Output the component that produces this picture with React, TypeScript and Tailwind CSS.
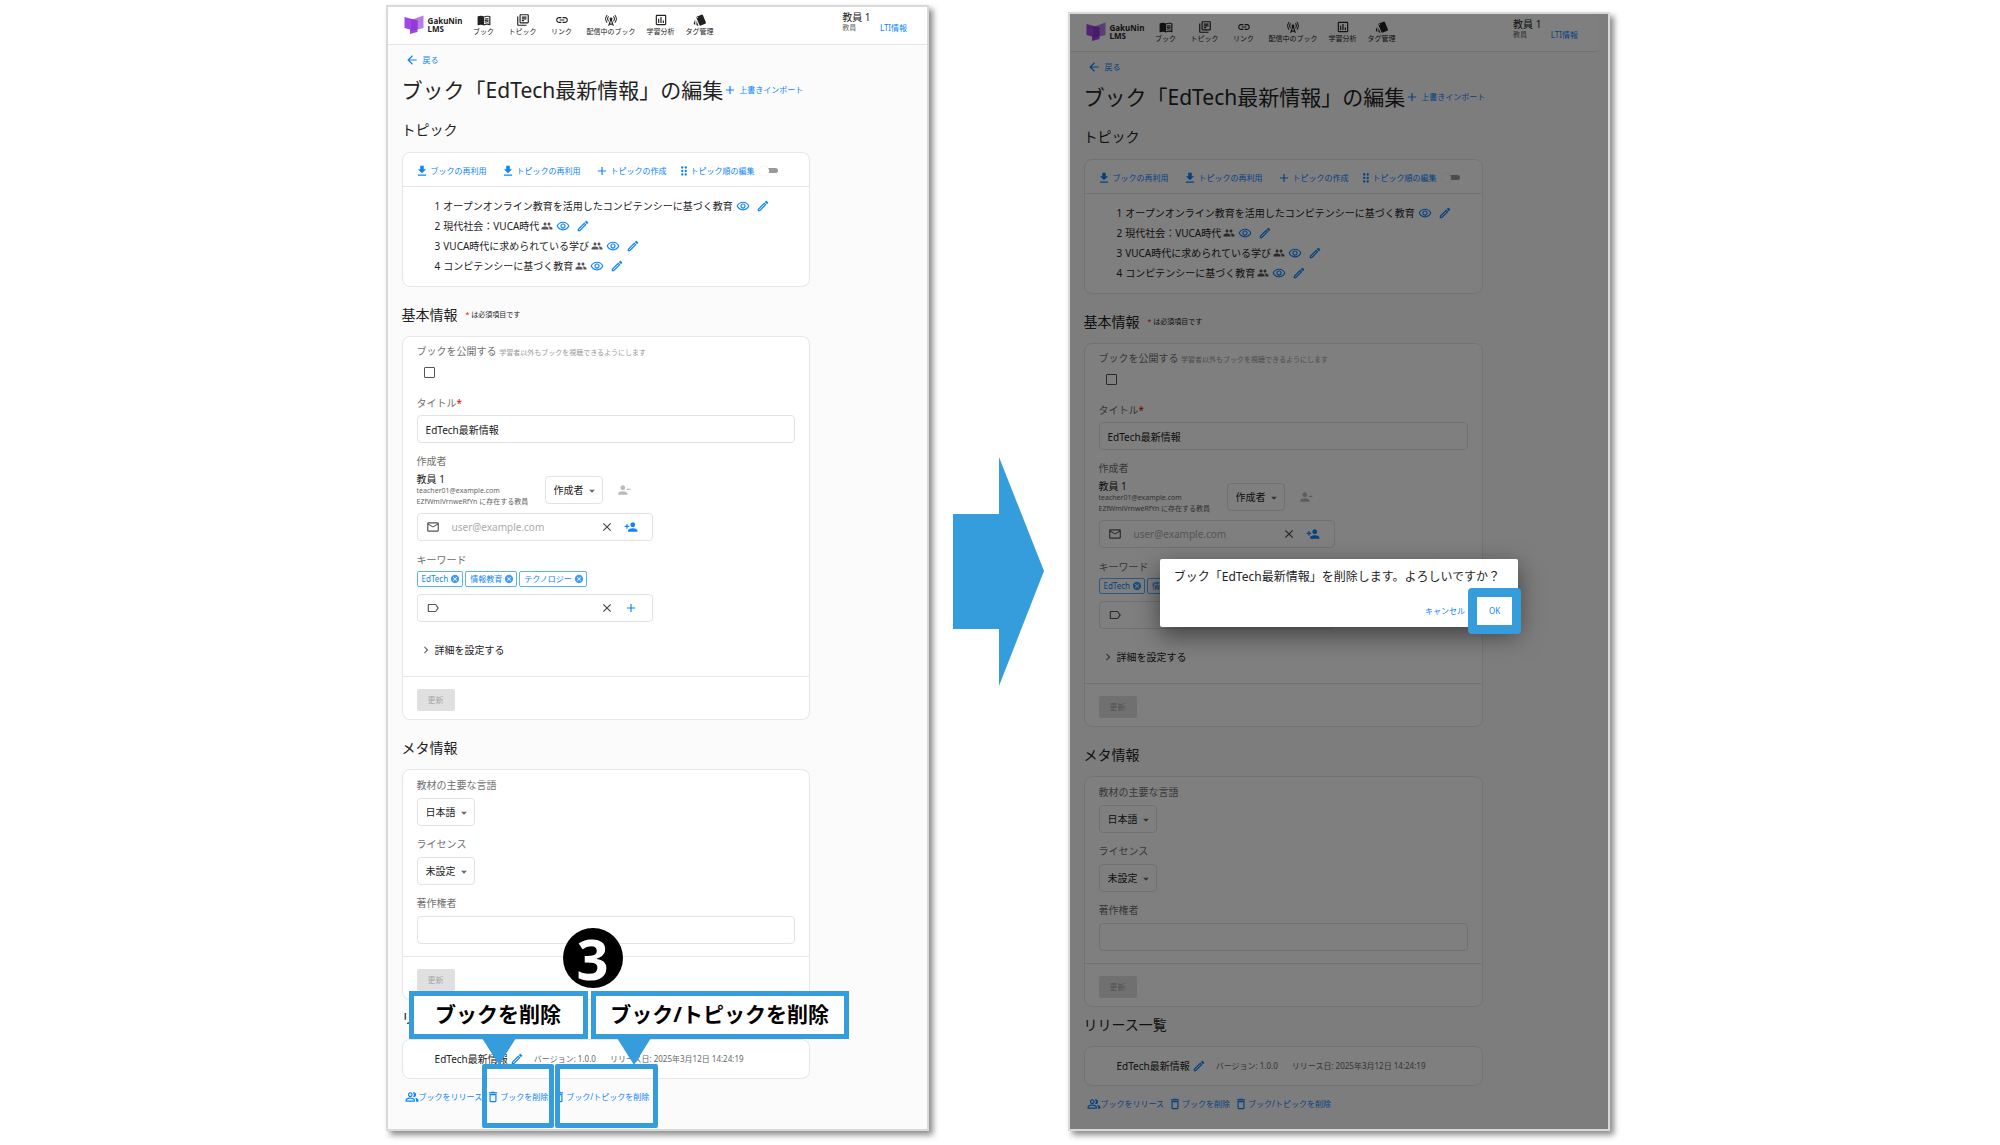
import { useId, useState } from "react";
import type { ReactNode } from "react";
import type { IconType } from "react-icons";
import {
  MdAdd,
  MdArrowBack,
  MdArrowDropDown,
  MdCancel,
  MdCellTower,
  MdChevronRight,
  MdClose,
  MdDeleteOutline,
  MdDragIndicator,
  MdGetApp,
  MdLabelOutline,
  MdLink,
  MdMailOutline,
  MdMenuBook,
  MdOutlineAssessment,
  MdOutlineEdit,
  MdOutlineLibraryBooks,
  MdOutlinePeopleAlt,
  MdOutlineRemoveRedEye,
  MdPeople,
  MdPersonAdd,
  MdPersonRemove,
  MdStyle,
} from "react-icons/md";

const nav: { label: string; icon: IconType }[] = [
  { label: "ブック", icon: MdMenuBook },
  { label: "トピック", icon: MdOutlineLibraryBooks },
  { label: "リンク", icon: MdLink },
  { label: "配信中のブック", icon: MdCellTower },
  { label: "学習分析", icon: MdOutlineAssessment },
  { label: "タグ管理", icon: MdStyle },
];

const topics = [
  { title: "オープンオンライン教育を活用したコンピテンシーに基づく教育", shared: false },
  { title: "現代社会：VUCA時代", shared: true },
  { title: "VUCA時代に求められている学び", shared: true },
  { title: "コンピテンシーに基づく教育", shared: true },
];

function Logo() {
  return (
    <a href="#" className="flex items-center gap-1 text-[8px] leading-2 font-bold text-[#222]">
      <svg viewBox="0 0 40 38" className="h-[19px] w-5" aria-hidden="true">
        <path d="M14 10 L39 1 V26 L14 32 Z" fill="#b87be8" />
        <path d="M1 4 L27 11 V34 L12 38 V29 L1 26 Z" fill="#a445e6" />
        <path d="M14 8 L27 11 V29 L14 32 Z" fill="#8f3bd6" />
      </svg>
      <span>
        GakuNin
        <br />
        LMS
      </span>
    </a>
  );
}

function LinkButton({ icon: Icon, children }: { icon: IconType; children: ReactNode }) {
  return (
    <button type="button" className="flex items-center gap-0.5 text-[8px] text-[#0a84ff]">
      <Icon className="size-3.5" />
      {children}
    </button>
  );
}

function Card({ children }: { children: ReactNode }) {
  return <div className="rounded-lg border border-[#e6e6e6] bg-white">{children}</div>;
}

function SectionTitle({ children }: { children: ReactNode }) {
  return <h2 className="flex items-center gap-2 text-sm leading-5">{children}</h2>;
}

function SelectBox({ id, label, value }: { id?: string; label?: string; value: string }) {
  return (
    <span className="relative inline-flex">
      <select
        id={id}
        aria-label={label}
        className="h-7 appearance-none rounded-sm border border-[#e2e2e2] bg-white pr-[18px] pl-2 text-[10px] text-[#222]"
      >
        <option>{value}</option>
      </select>
      <MdArrowDropDown className="pointer-events-none absolute top-2 right-1 size-3.5 text-[#666]" />
    </span>
  );
}

function UpdateFooter() {
  return (
    <div className="border-t border-[#e6e6e6] px-3.5 pt-3 pb-2">
      <button type="button" disabled className="block h-[22px] w-[38px] rounded-xs bg-[#e0e0e0] text-[8px] text-[#a6a6a6]">
        更新
      </button>
    </div>
  );
}

function Topics() {
  const [sorting, setSorting] = useState(false);

  return (
    <Card>
      <div className="flex h-[34px] items-center gap-3.5 border-b border-[#e6e6e6] px-3 pt-0.5 whitespace-nowrap">
        <LinkButton icon={MdGetApp}>ブックの再利用</LinkButton>
        <LinkButton icon={MdGetApp}>トピックの再利用</LinkButton>
        <LinkButton icon={MdAdd}>トピックの作成</LinkButton>
        <label className="-ml-1 flex items-center text-[8px] text-[#0a84ff]">
          <MdDragIndicator className="size-3.5" />
          トピック順の編集
          <input
            type="checkbox"
            className="peer sr-only"
            checked={sorting}
            onChange={(e) => setSorting(e.target.checked)}
          />
          <span className="ml-2 flex h-[5px] w-[15px] items-center rounded-full bg-[#999] peer-checked:justify-end">
            <span className="-ml-1 size-2.5 rounded-full bg-white shadow-[0_0_1px_#ccc]" />
          </span>
        </label>
      </div>
      <ol className="pt-[9px] pb-[10px] pl-8 text-[10px] leading-5 whitespace-nowrap">
        {topics.map((topic, i) => (
          <li key={topic.title} className="flex items-center">
            <span className="mr-[3px]">{i + 1}</span>
            {topic.title}
            {topic.shared && <MdPeople className="ml-0.5 size-3 text-[#555]" />}
            <button type="button" aria-label="プレビュー" className="ml-[3px] text-[#0a84ff]">
              <MdOutlineRemoveRedEye className="size-3.5" />
            </button>
            <button type="button" aria-label="編集" className="ml-1.5 text-[#0a84ff]">
              <MdOutlineEdit className="size-3.5" />
            </button>
          </li>
        ))}
      </ol>
    </Card>
  );
}

function Chip({ children }: { children: ReactNode }) {
  return (
    <span className="flex h-4 items-center gap-0.5 rounded-xs border border-[#5ab0ff] pr-0.5 pl-1 text-[8px] leading-3 text-[#0a84ff]">
      {children}
      <button type="button" aria-label="削除" className="text-[#3b9dff]">
        <MdCancel className="size-2.5" />
      </button>
    </span>
  );
}

function BasicInfo() {
  const id = useId();
  const [title, setTitle] = useState("EdTech最新情報");

  return (
    <Card>
      <div className="px-3.5 pt-[6px] text-[10px] text-[#222]">
        <label htmlFor={`${id}-open`} className="block leading-4 text-[#707070]">
          ブックを公開する <span className="text-[7px] text-[#999]">学習者以外もブックを視聴できるようにします</span>
        </label>
        <input
          id={`${id}-open`}
          type="checkbox"
          className="mt-[6px] ml-[7px] block size-[11px] appearance-none rounded-[1px] border border-[#555] checked:bg-[#0a84ff]"
        />
        <label htmlFor={`${id}-title`} className="mt-[17px] block leading-4 text-[#707070]">
          タイトル<span className="text-[#e00]">*</span>
        </label>
        <input
          id={`${id}-title`}
          value={title}
          onChange={(e) => setTitle(e.target.value)}
          className="mt-1 block h-7 w-full rounded-sm border border-[#e2e2e2] px-2"
        />
        <p className="mt-[10px] leading-4 text-[#707070]">作成者</p>
        <div className="mt-1 flex items-center">
          <div className="w-[128px] whitespace-nowrap">
            <p className="leading-3">教員 1</p>
            <p className="text-[7px] leading-[11px] text-[#666]">teacher01@example.com</p>
            <p className="text-[7px] leading-[11px] text-[#666]">EZfWmlVrnweRfYn に存在する教員</p>
          </div>
          <SelectBox label="役割" value="作成者" />
          <button type="button" disabled aria-label="作成者を除外" className="ml-3.5 text-[#bbb]">
            <MdPersonRemove className="size-3.5" />
          </button>
        </div>
        <div className="mt-[6px] flex h-7 w-3/5 max-w-full min-w-[236px] items-center rounded-sm border border-[#e2e2e2] pr-3.5 pl-2">
          <MdMailOutline className="size-3.5 shrink-0 text-[#555]" />
          <input
            type="email"
            aria-label="メールアドレス"
            placeholder="user@example.com"
            className="ml-3 w-0 grow placeholder:text-[#aaa]"
          />
          <button type="button" aria-label="クリア" className="text-[#444]">
            <MdClose className="size-3.5" />
          </button>
          <button type="button" aria-label="作成者を追加" className="ml-2.5 text-[#0a84ff]">
            <MdPersonAdd className="size-3.5" />
          </button>
        </div>
        <label htmlFor={`${id}-keyword`} className="mt-[11px] block leading-4 text-[#707070]">
          キーワード
        </label>
        <div className="mt-[3px] flex gap-0.5">
          <Chip>EdTech</Chip>
          <Chip>情報教育</Chip>
          <Chip>テクノロジー</Chip>
        </div>
        <div className="mt-[7px] flex h-7 w-3/5 max-w-full min-w-[236px] items-center rounded-sm border border-[#e2e2e2] pr-3.5 pl-2">
          <MdLabelOutline className="size-3.5 shrink-0 text-[#555]" />
          <input id={`${id}-keyword`} className="ml-3 w-0 grow" />
          <button type="button" aria-label="クリア" className="text-[#444]">
            <MdClose className="size-3.5" />
          </button>
          <button type="button" aria-label="キーワードを追加" className="ml-2.5 text-[#0a84ff]">
            <MdAdd className="size-3.5" />
          </button>
        </div>
        <button type="button" className="mt-5 mb-[18px] ml-0.5 flex items-center gap-0.5 leading-4">
          <MdChevronRight className="size-3.5 text-[#666]" />
          詳細を設定する
        </button>
      </div>
      <UpdateFooter />
    </Card>
  );
}

function MetaInfo() {
  const id = useId();

  return (
    <Card>
      <div className="flex flex-col items-start px-3.5 pt-[7px] pb-3 text-[10px] text-[#707070]">
        <label htmlFor={`${id}-lang`} className="mb-[5px] leading-4">
          教材の主要な言語
        </label>
        <SelectBox id={`${id}-lang`} value="日本語" />
        <label htmlFor={`${id}-license`} className="mt-[10px] mb-[5px] leading-4">
          ライセンス
        </label>
        <SelectBox id={`${id}-license`} value="未設定" />
        <label htmlFor={`${id}-owner`} className="mt-[10px] mb-[5px] leading-4">
          著作権者
        </label>
        <input id={`${id}-owner`} className="h-7 w-full rounded-sm border border-[#e2e2e2] px-2" />
      </div>
      <UpdateFooter />
    </Card>
  );
}

function BookEdit() {
  return (
    <div className="text-[#222]">
      <header className="flex h-[38px] items-start border-b border-[#e4e4e4] bg-white pl-4 whitespace-nowrap">
        <div className="w-[61px] pt-2">
          <Logo />
        </div>
        <nav className="flex gap-px pt-[6px] text-[7px] leading-[10px]">
          {nav.map(({ label, icon: Icon }) => (
            <a key={label} href="#" className="flex min-w-[38px] flex-col items-center px-[5px]">
              <Icon className="size-3.5" />
              {label}
            </a>
          ))}
        </nav>
        <div className="ml-auto flex items-end gap-2 pt-[3px] pr-[18px]">
          <p className="text-[10px] leading-[14px]">
            教員 1<span className="block text-[7px] leading-2 text-[#666]">教員</span>
          </p>
          <button type="button" className="w-[30px] text-[8px] leading-2 text-[#0a84ff]">
            LTI情報
          </button>
        </div>
      </header>

      <main className="px-3.5">
        <div className="pt-2 pl-[3px]">
          <a href="#" className="flex items-center gap-1 text-[8px] leading-3 text-[#0a84ff]">
            <MdArrowBack className="size-3.5" />
            戻る
          </a>
        </div>
        <div className="mt-[7px] flex items-center whitespace-nowrap">
          <h1 className="text-[21px] leading-8">ブック「EdTech最新情報」の編集</h1>
          <LinkButton icon={MdAdd}>上書きインポート</LinkButton>
        </div>

        <div className="w-4/5 pt-[14px]">
          <SectionTitle>トピック</SectionTitle>
          <div className="mt-3 mb-[18px]">
            <Topics />
          </div>
          <SectionTitle>
            基本情報
            <span className="text-[7px]">
              <span className="text-[#e00]">*</span> は必須項目です
            </span>
          </SectionTitle>
          <div className="mt-[11px] mb-[18px]">
            <BasicInfo />
          </div>
          <SectionTitle>メタ情報</SectionTitle>
          <div className="mt-[11px] mb-2">
            <MetaInfo />
          </div>
          <SectionTitle>リリース一覧</SectionTitle>
          <div className="mt-[11px]">
            <Card>
              <div className="flex h-[38px] items-center pl-8 text-[10px] whitespace-nowrap">
                EdTech最新情報
                <button type="button" aria-label="編集" className="ml-0.5 text-[#0a84ff]">
                  <MdOutlineEdit className="size-3.5" />
                </button>
                <span className="ml-2.5 text-[8px] text-[#666]">バージョン: 1.0.0</span>
                <span className="ml-3.5 text-[8px] text-[#666]">リリース日: 2025年3月12日 14:24:19</span>
              </div>
            </Card>
          </div>
        </div>

        <div className="flex gap-1 pt-2.5 pl-[3px] whitespace-nowrap text-[8px] leading-4 text-[#0a84ff]">
          <button type="button" className="flex items-center">
            <MdOutlinePeopleAlt className="size-3.5" />
            ブックをリリース
          </button>
          <button type="button" className="flex items-center">
            <MdDeleteOutline className="size-3.5" />
            ブックを削除
          </button>
          <button type="button" className="flex items-center">
            <MdDeleteOutline className="size-3.5" />
            ブック/トピックを削除
          </button>
        </div>
      </main>
    </div>
  );
}

function Pointer({ className }: { className: string }) {
  return (
    <svg viewBox="0 0 34 27" className={className} aria-hidden="true">
      <path d="M0 0 H34 L17 27 Z" fill="#369ddd" />
    </svg>
  );
}

function Callouts() {
  return (
    <div className="pointer-events-none text-[21px] font-bold whitespace-nowrap text-black">
      <div className="absolute top-[1057px] left-[94px] h-16 w-[72px] rounded-xs border-5 border-[#369ddd]" />
      <div className="absolute top-[1057px] left-[167px] h-16 w-[103px] rounded-xs border-5 border-[#369ddd]" />
      <Pointer className="absolute top-[1031px] left-[94px] h-[27px] w-[34px]" />
      <Pointer className="absolute top-[1031px] left-[229px] h-[27px] w-[34px]" />
      <div className="absolute top-[984px] left-[21px] flex h-12 w-[179px] items-center justify-center border-5 border-[#369ddd] bg-white">
        ブックを削除
      </div>
      <div className="absolute top-[984px] left-[203px] flex h-12 w-[258px] items-center justify-center border-5 border-[#369ddd] bg-white">
        ブック/トピックを削除
      </div>
      <div className="absolute top-[921px] left-[175px] flex size-[60px] items-center justify-center rounded-full bg-black text-[56px] leading-[60px] text-white">
        3
      </div>
    </div>
  );
}

function DeleteDialog() {
  return (
    <div className="absolute inset-0 flex items-center justify-center bg-black/50 pt-[42px]">
      <div
        role="dialog"
        aria-label="ブックの削除"
        className="rounded-xs bg-white pt-2 pr-[18px] pb-2 pl-3.5 whitespace-nowrap shadow-[0_8px_24px_rgba(0,0,0,0.5)]"
      >
        <p className="text-xs leading-5 text-[#222]">ブック「EdTech最新情報」を削除します。よろしいですか？</p>
        <div className="mt-4 flex justify-end gap-6 text-[8px] leading-4 text-[#0a84ff]">
          <button type="button">キャンセル</button>
          <button type="button" className="relative">
            OK
            <span className="absolute -inset-x-[21px] -inset-y-[15px] rounded-sm border-9 border-[#369ddd]" />
          </button>
        </div>
      </div>
    </div>
  );
}

export default function App() {
  return (
    <div className="flex min-h-screen items-start justify-center gap-6 bg-white pr-1 font-['Noto_Sans','Noto_Sans_CJK_JP',sans-serif]">
      <section className="relative mt-[5px] w-[27.2%] min-w-[520px] border-2 border-[#d9d9d9] bg-[#fbfbfb] pb-6 shadow-[4px_4px_6px_rgba(0,0,0,0.45)]">
        <BookEdit />
        <Callouts />
      </section>

      <svg viewBox="0 0 91 229" className="mt-[457px] h-[229px] w-[91px] shrink-0" aria-hidden="true">
        <path d="M0 57 H46 V0 L91 114 L46 229 V172 H0 Z" fill="#369ddd" />
      </svg>

      <section className="relative mt-3 w-[27.2%] min-w-[520px] border-2 border-[#d9d9d9] bg-[#fbfbfb] pr-[11px] pb-[17px] shadow-[4px_4px_6px_rgba(0,0,0,0.45)]">
        <BookEdit />
        <DeleteDialog />
      </section>
    </div>
  );
}
